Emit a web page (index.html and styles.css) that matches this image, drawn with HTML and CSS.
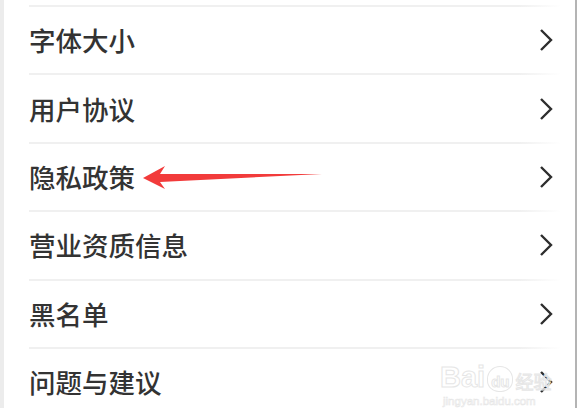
FILE: index.html
```html
<html>
  <head>
    <title>设置</title>
    <link rel="stylesheet" href="styles.css">
  </head>
  <body>
    <div class="page">
      <ul class="menu">
        <li class="row"><span>字体大小</span><svg class="chev" viewBox="0 0 14 24"><path d="M2 2 L12 12 L2 22" /></svg></li>
        <li class="row"><span>用户协议</span><svg class="chev" viewBox="0 0 14 24"><path d="M2 2 L12 12 L2 22" /></svg></li>
        <li class="row"><span>隐私政策</span><svg class="chev" viewBox="0 0 14 24"><path d="M2 2 L12 12 L2 22" /></svg></li>
        <li class="row"><span>营业资质信息</span><svg class="chev" viewBox="0 0 14 24"><path d="M2 2 L12 12 L2 22" /></svg></li>
        <li class="row"><span>黑名单</span><svg class="chev" viewBox="0 0 14 24"><path d="M2 2 L12 12 L2 22" /></svg></li>
        <li class="row"><span>问题与建议</span><svg class="chev" viewBox="0 0 14 24"><path d="M2 2 L12 12 L2 22" /></svg></li>
      </ul>
    </div>

    <!-- annotation drawn over the screenshot -->
    <svg class="arrow" viewBox="0 0 577 408">
      <polygon points="143,178 165,166 160,174 322,174 160,182 165,189" />
    </svg>

    <div class="watermark">
      <div class="wm-top">
        <span class="wm-bai">Bai</span>
        <span class="wm-paw">du</span>
        <span class="wm-jy">经验</span>
      </div>
      <div class="wm-url">jingyan.baidu.com</div>
    </div>
  </body>
</html>
```

FILE: styles.css
```css
:root {
  --ink: #333;
  --rule: #f0f0f0;
}

body {
  margin: 0;
  width: 577px;
  height: 408px;
  overflow: hidden;
  background-color: #fff;
  font-family: "Noto Sans CJK SC", "Noto Sans", sans-serif;
  color: var(--ink);
}

div.page {
  height: 408px;
  border-left: 4px solid #ececec;
  border-right: 2px solid #b4b4b4;
  box-sizing: border-box;
  padding-top: 5px;
}

ul.menu {
  list-style: none;
  margin: 0 15px 0 25px;
  padding: 0;
}
li.row {
  height: 68.4px;
  box-sizing: border-box;
  border-top: 2px solid var(--rule);
  border-image: linear-gradient(to right, var(--rule) 92%, rgba(240, 240, 240, 0)) 1;
  display: flex;
  align-items: center;
  justify-content: space-between;
  padding: 0 7px 0 0;
  font-size: 26.5px;
  font-weight: 500;
}
li.row span {
  margin-top: -1px;
}
svg.chev {
  width: 14px;
  height: 24px;
  fill: none;
  stroke: #2e2e2e;
  stroke-width: 2.4;
}

svg.arrow {
  position: absolute;
  left: 0;
  top: 0;
  width: 577px;
  height: 408px;
  fill: #f23b3b;
}

div.watermark {
  position: absolute;
  left: 440px;
  top: 344px;
  width: 124px;
  color: rgba(0, 0, 0, 0);
  -webkit-text-stroke: 1px #e6e6e6;
  font-family: "Liberation Sans", sans-serif;
}
div.wm-top {
  display: flex;
  align-items: flex-end;
  height: 48px;
}
span.wm-bai {
  font-size: 29px;
  font-weight: bold;
  line-height: 1;
}
span.wm-paw {
  font-size: 15px;
  font-weight: bold;
  border: 1px solid #e6e6e6;
  border-radius: 50% 50% 45% 45%;
  padding: 7px 3px 2px;
  margin: 0 2px;
  line-height: 1;
}
span.wm-jy {
  font-family: "Noto Sans CJK SC", sans-serif;
  font-size: 18px;
  line-height: 1;
  margin-bottom: 2px;
}
div.wm-url {
  font-size: 11.5px;
  -webkit-text-stroke: 0.6px #e6e6e6;
  margin-top: 3px;
  padding-left: 3px;
}
```
